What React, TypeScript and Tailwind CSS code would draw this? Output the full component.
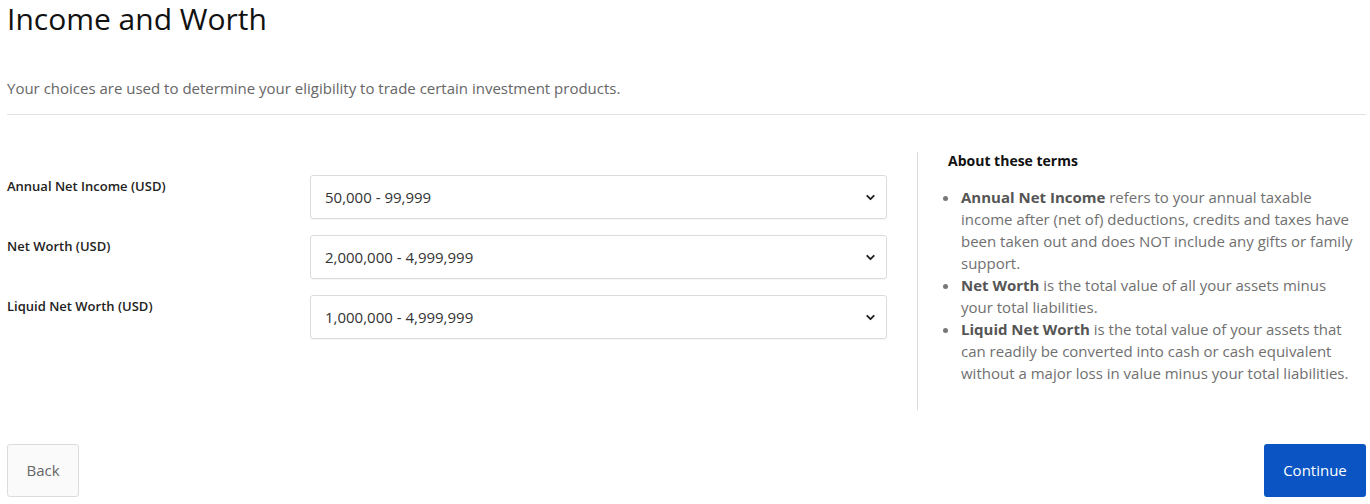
import { ChevronDown } from 'lucide-react';

const fields = [
  { label: 'Annual Net Income (USD)', value: '50,000 - 99,999' },
  { label: 'Net Worth (USD)', value: '2,000,000 - 4,999,999' },
  { label: 'Liquid Net Worth (USD)', value: '1,000,000 - 4,999,999' },
];

function SelectBox({ value }: { value: string }) {
  return (
    <div className="flex h-[44px] w-[577px] items-center justify-between rounded-[3px] border border-[#dcdcdc] bg-white pl-[14px] pr-[9px] shadow-[0_1px_1px_rgba(0,0,0,0.04)]">
      <span className="text-[15px] text-[#333]">{value}</span>
      <ChevronDown className="h-[13px] w-[13px] text-[#222]" strokeWidth={3.5} />
    </div>
  );
}

export default function App() {
  return (
    <div className="min-h-[504px] bg-white pl-[7px] pr-[4px] font-['Open_Sans','Liberation_Sans',sans-serif]">
      <h1 className="pt-[1px] text-[30px] leading-[36px] font-medium text-[#111]">Income and Worth</h1>
      <p className="mt-[41px] text-[15px] leading-[20px] text-[#666]">
        Your choices are used to determine your eligibility to trade certain investment products.
      </p>
      <div className="mt-[16px] h-px bg-[#e3e3e3]" />

      <div className="mt-[37px] flex">
        <div className="flex w-[910px] shrink-0 flex-col gap-[16px] pt-[23px]">
          {fields.map((f) => (
            <div key={f.label} className="flex">
              <label className="w-[303px] pt-[2px] text-[13px] leading-[18px] font-semibold text-[#222]">{f.label}</label>
              <SelectBox value={f.value} />
            </div>
          ))}
        </div>
        <div className="h-[258px] flex-1 border-l border-[#dadada] pl-[30px]">
          <h2 className="text-[14px] leading-[18px] font-bold text-[#111]">About these terms</h2>
          <ul className="mt-[16px] w-[410px] list-disc pl-[12px] text-[15px] leading-[22px] text-[#707070] marker:text-[#777]">
            <li className="pl-[1px]">
              <b className="font-bold text-[#555]">Annual Net Income</b> refers to your annual taxable income after (net of) deductions, credits and taxes have been taken out and does NOT include any gifts or family support.
            </li>
            <li className="pl-[1px]">
              <b className="font-bold text-[#555]">Net Worth</b> is the total value of all your assets minus your total liabilities.
            </li>
            <li className="pl-[1px]">
              <b className="font-bold text-[#555]">Liquid Net Worth</b> is the total value of your assets that can readily be converted into cash or cash equivalent without a major loss in value minus your total liabilities.
            </li>
          </ul>
        </div>
      </div>

      <div className="mt-[34px] flex items-center justify-between">
        <button className="h-[53px] w-[72px] rounded-[3px] border border-[#dcdcdc] bg-[#fafafa] text-[15px] text-[#666]">Back</button>
        <button className="h-[53px] w-[102px] rounded-[3px] bg-[#0a55c3] text-[15px] text-white">Continue</button>
      </div>
    </div>
  );
}
